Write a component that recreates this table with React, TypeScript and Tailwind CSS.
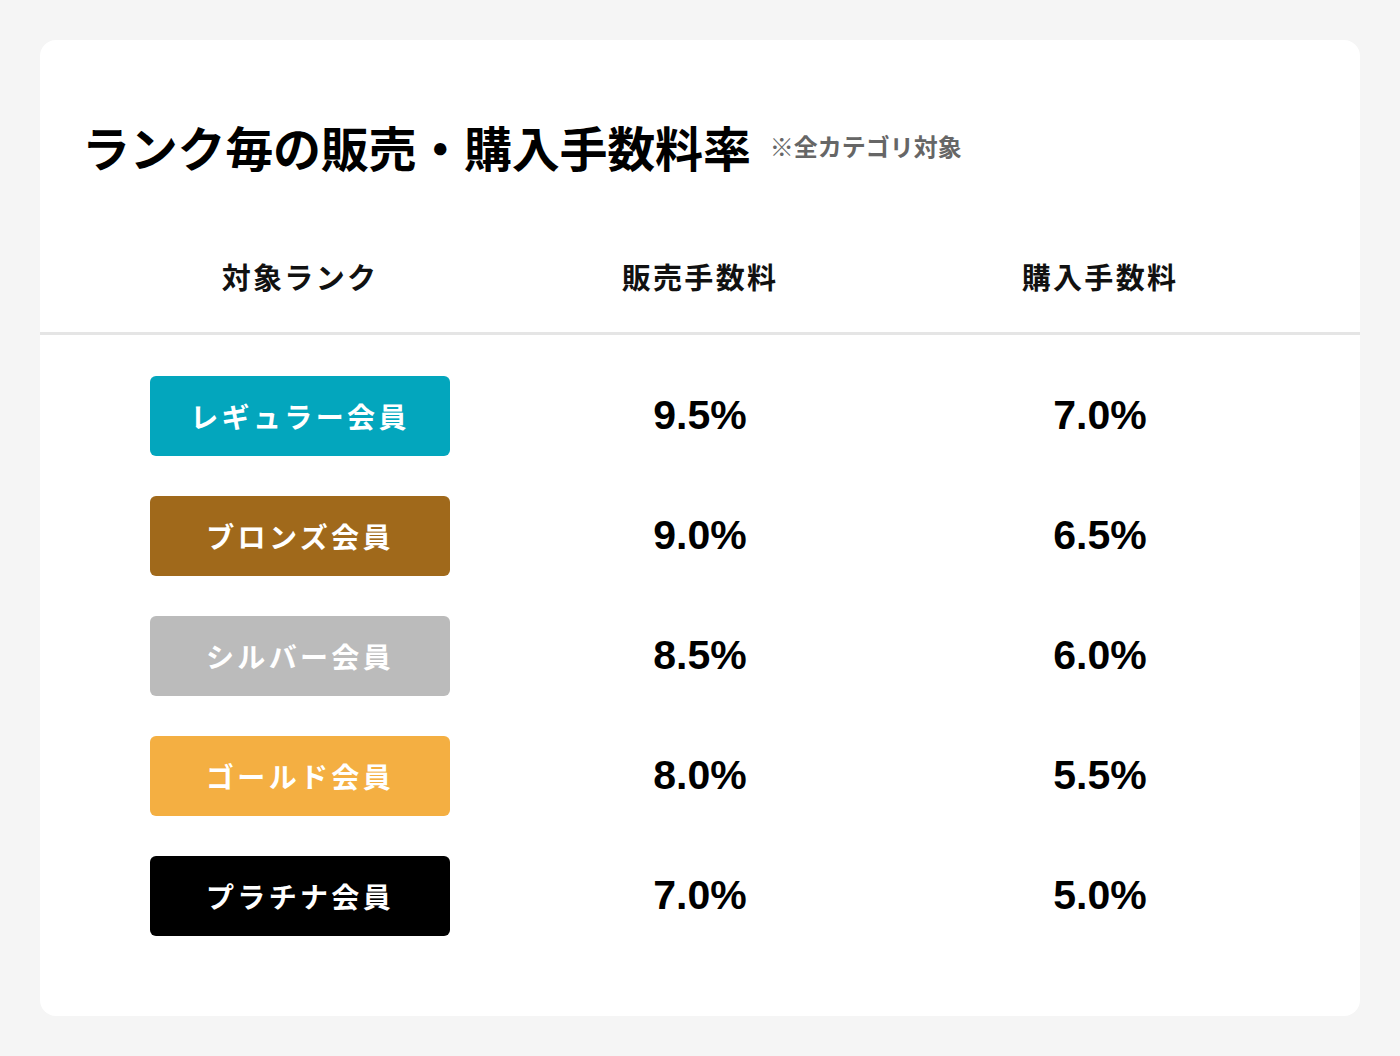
const ranks = [
  { name: 'レギュラー会員', color: 'bg-[#03a6bd]', sell: '9.5%', buy: '7.0%' },
  { name: 'ブロンズ会員', color: 'bg-[#a0691b]', sell: '9.0%', buy: '6.5%' },
  { name: 'シルバー会員', color: 'bg-[#bbbbbb]', sell: '8.5%', buy: '6.0%' },
  { name: 'ゴールド会員', color: 'bg-[#f4af42]', sell: '8.0%', buy: '5.5%' },
  { name: 'プラチナ会員', color: 'bg-[#000000]', sell: '7.0%', buy: '5.0%' },
];

const jp = "font-['Noto_Sans_CJK_JP','Noto_Sans',sans-serif]";
const num = "font-['Liberation_Sans',Arial,sans-serif]";

export default function App() {
  return (
    <div className={`min-h-[1056px] bg-[#f5f5f5] p-[40px] ${jp}`}>
      <div className="rounded-2xl bg-white pt-[70px] pb-[80px]">
        {/* title */}
        <div className="flex items-center pl-[42px] h-[72px]">
          <h1 className="text-[48px] font-bold leading-none text-black tracking-[-0.005em]">
            ランク毎の販売・購入手数料率
          </h1>
          <span className="ml-[19px] text-[24px] font-bold leading-none text-[#666666]">
            ※全カテゴリ対象
          </span>
        </div>

        {/* header */}
        <div className="mt-[40px] grid grid-cols-3 px-[60px] h-[113px] items-center border-b-[3px] border-[#e5e5e5]">
          {['対象ランク', '販売手数料', '購入手数料'].map((h) => (
            <div key={h} className="text-center text-[29px] font-bold tracking-[0.08em] text-[#111111]">
              {h}
            </div>
          ))}
        </div>

        {/* rows */}
        <div className="mt-[41px] flex flex-col gap-[40px] px-[60px]">
          {ranks.map((r) => (
            <div key={r.name} className="grid grid-cols-3 items-center h-[80px]">
              <div className="flex justify-center">
                <div
                  className={`${r.color} flex h-[80px] w-[300px] items-center justify-center rounded-md text-[28px] font-bold tracking-[0.12em] text-white`}
                >
                  {r.name}
                </div>
              </div>
              <div className={`${num} text-center text-[41px] font-bold text-black`}>{r.sell}</div>
              <div className={`${num} text-center text-[41px] font-bold text-black`}>{r.buy}</div>
            </div>
          ))}
        </div>
      </div>
    </div>
  );
}
